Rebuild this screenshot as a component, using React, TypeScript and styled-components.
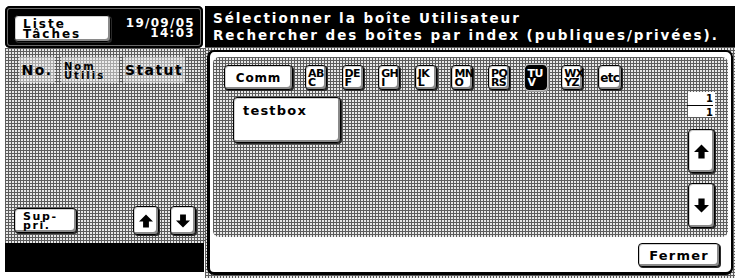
import React from 'react';
import styled, { createGlobalStyle, css } from 'styled-components';

const Global = createGlobalStyle`
  html, body { margin: 0; padding: 0; background: #fff; }
  body { font-family: "DejaVu Sans", "Liberation Sans", sans-serif; font-weight: bold; }
  * { box-sizing: border-box; }
`;

const dither = css`
  background-color: #e8e8e8;
  background-image:
    linear-gradient(to right, #5c5c5c 1px, transparent 1px),
    linear-gradient(to bottom, #5c5c5c 1px, transparent 1px);
  background-size: 3px 3px;
`;

const Screen = styled.div`
  width: 735px;
  height: 278px;
  padding: 6px 0 0 5px;
  display: flex;
  background: #fff;
  overflow: hidden;
`;

const LeftCol = styled.div`
  width: 200px;
  display: flex;
  flex-direction: column;
  padding-bottom: 6px;
`;

const LeftHeader = styled.div`
  height: 42px;
  margin-right: 2px;
  background: #000;
  border-radius: 5px;
  box-shadow: inset 0 0 0 2px #000, inset 0 0 0 3px #6a6a6a;
  display: flex;
  justify-content: space-between;
  align-items: flex-start;
  padding: 9px 8px 0 9px;
`;

const Button = styled.div<{ $w: number; $h: number; $selected?: boolean }>`
  width: ${p => p.$w}px;
  height: ${p => p.$h}px;
  flex: none;
  border: 1px solid #000;
  border-radius: 4px;
  background: ${p => (p.$selected ? '#000' : '#fff')};
  color: ${p => (p.$selected ? '#fff' : '#000')};
  box-shadow: ${p =>
    p.$selected
      ? '0 0 0 1px #bdbdbd, 1px 1px 0 1px #9a9a9a'
      : 'inset -2px -2px 0 #8a8a8a, inset 1px 1px 0 #cfcfcf, 1px 1px 0 #2a2a2a'};
  display: flex;
  align-items: center;
  justify-content: center;
`;

const TwoLineLabel = styled.div<{ $size: number; $ls: number }>`
  font-family: "DejaVu Sans", sans-serif;
  font-weight: bold;
  font-size: ${p => p.$size}px;
  line-height: ${p => p.$size - 2}px;
  letter-spacing: ${p => p.$ls}px;
  text-align: left;
  width: 100%;
  padding-left: 8px;
  padding-top: 1px;
`;

const DateBox = styled.div`
  color: #fff;
  font-size: 12px;
  line-height: 10px;
  letter-spacing: 1.3px;
  text-align: right;
  padding-top: 3px;
`;

const LeftPanel = styled.div`
  ${dither};
  flex: 1;
  display: flex;
  flex-direction: column;
  justify-content: space-between;
  padding: 9px 9px 8px 9px;
`;

const ColHeaders = styled.div`
  display: flex;
  align-items: flex-start;
`;

const ColHead = styled.div<{ $w: number; $ml: number }>`
  width: ${p => p.$w}px;
  margin-left: ${p => p.$ml}px;
  height: 26px;
  background: rgba(240, 240, 240, 0.5);
  font-size: 14px;
  letter-spacing: 1.4px;
  display: flex;
  align-items: center;
  justify-content: center;
`;

const SmallHead = styled.div`
  font-size: 10px;
  line-height: 9px;
  letter-spacing: 2px;
  padding-top: 1px;
  text-align: left;
  width: 100%;
  padding-left: 3px;
`;

const LeftBottom = styled.div`
  display: flex;
  align-items: center;
`;

const ArrowPair = styled.div`
  margin-left: auto;
  display: flex;
  gap: 11px;
`;

const LeftFooter = styled.div`
  height: 29px;
  margin-right: 1px;
  background: #000;
`;

const RightCol = styled.div`
  flex: 1;
  display: flex;
  flex-direction: column;
`;

const RightHeader = styled.div`
  height: 41px;
  background: #000;
  color: #fff;
  font-size: 13.5px;
  line-height: 17px;
  letter-spacing: 1.95px;
  padding: 4px 0 0 8px;
  white-space: nowrap;
`;

const RightBody = styled.div`
  ${dither};
  flex: 1;
  padding: 3px 2px 3px 2px;
  display: flex;
`;

const Panel = styled.div`
  flex: 1;
  background: #fff;
  border-style: solid;
  border-color: #000;
  border-width: 2px 2px 3px 3px;
  border-radius: 7px;
  padding: 5px 3px 0 3px;
  display: flex;
  flex-direction: column;
`;

const GrayArea = styled.div`
  ${dither};
  height: 180px;
  border-radius: 6px;
  display: flex;
  flex-direction: column;
`;

const TabRow = styled.div`
  display: flex;
  align-items: center;
  padding: 8px 0 0 11px;
`;

const Tabs = styled.div`
  display: flex;
  gap: 14.6px;
  margin-left: 12px;
`;

const TabLabel = styled.div`
  font-family: "DejaVu Sans", sans-serif;
  font-weight: bold;
  font-size: 11px;
  line-height: 9px;
  text-align: left;
  width: 100%;
  padding-left: 2px;
  padding-top: 1px;
  letter-spacing: -0.6px;
`;

const BtnText = styled.span<{ $size: number; $ls?: number }>`
  font-size: ${p => p.$size}px;
  letter-spacing: ${p => p.$ls ?? 1}px;
`;

const AreaBody = styled.div`
  flex: 1;
  display: flex;
  justify-content: space-between;
  padding: 0 13px 0 20px;
`;

const BoxList = styled.div`
  padding-top: 7px;
`;

const BoxButton = styled(Button)`
  align-items: flex-start;
  justify-content: flex-start;
  padding: 5px 0 0 9px;
`;

const SideCol = styled.div`
  width: 27px;
  padding-top: 2px;
  display: flex;
  flex-direction: column;
  align-items: stretch;
`;

const PageBox = styled.div`
  background: #fff;
  height: 25px;
  font-size: 10px;
  line-height: 10px;
  text-align: right;
  padding: 2px 2px 0 0;
`;

const PageLine = styled.div`
  height: 1px;
  background: #000;
  margin: 1px 0 2px -1px;
`;

const ScrollStack = styled.div`
  margin-top: 12px;
  display: flex;
  flex-direction: column;
  gap: 10px;
`;

const PanelFooter = styled.div`
  display: flex;
  justify-content: flex-end;
  padding: 6px 8px 0 0;
`;

const Arrow = ({ down, size = 13 }: { down?: boolean; size?: number }) => (
  <svg
    width={size}
    height={size}
    viewBox="0 0 13 13"
    style={down ? { transform: 'rotate(180deg)' } : undefined}
  >
    <path d="M6.5 0.5 L13 7 H9.2 V12.5 H3.8 V7 H0 Z" fill="#000" />
  </svg>
);

const letterTabs: { top: string; bottom: string; selected?: boolean }[] = [
  { top: 'AB', bottom: 'C' },
  { top: 'DE', bottom: 'F' },
  { top: 'GH', bottom: 'I' },
  { top: 'JK', bottom: 'L' },
  { top: 'MN', bottom: 'O' },
  { top: 'PQ', bottom: 'RS' },
  { top: 'TU', bottom: 'V', selected: true },
  { top: 'WX', bottom: 'YZ' },
];

export default function App() {
  return (
    <>
      <Global />
      <Screen>
        <LeftCol>
          <LeftHeader>
            <Button $w={97} $h={27}>
              <TwoLineLabel $size={12} $ls={2}>
                Liste<br />Tâches
              </TwoLineLabel>
            </Button>
            <DateBox>
              19/09/05<br />14:03
            </DateBox>
          </LeftHeader>
          <LeftPanel>
            <ColHeaders>
              <ColHead $w={36} $ml={5}>No.</ColHead>
              <ColHead $w={58} $ml={6}>
                <SmallHead>
                  Nom<br />Utilis
                </SmallHead>
              </ColHead>
              <ColHead $w={62} $ml={4}>Statut</ColHead>
            </ColHeaders>
            <LeftBottom>
              <Button $w={63} $h={25}>
                <TwoLineLabel $size={11} $ls={1.6}>
                  Sup-<br />pri.
                </TwoLineLabel>
              </Button>
              <ArrowPair>
                <Button $w={26} $h={29}>
                  <Arrow size={14} />
                </Button>
                <Button $w={26} $h={29}>
                  <Arrow down size={14} />
                </Button>
              </ArrowPair>
            </LeftBottom>
          </LeftPanel>
          <LeftFooter />
        </LeftCol>
        <RightCol>
          <RightHeader>
            Sélectionner la boîte Utilisateur
            <br />
            Rechercher des boîtes par index (publiques/privées).
          </RightHeader>
          <RightBody>
            <Panel>
              <GrayArea>
                <TabRow>
                  <Button $w={69} $h={25}>
                    <BtnText $size={12} $ls={0.8}>Comm</BtnText>
                  </Button>
                  <Tabs>
                    {letterTabs.map(t => (
                      <Button key={t.top} $w={22} $h={25} $selected={t.selected}>
                        <TabLabel>
                          {t.top}
                          <br />
                          {t.bottom}
                        </TabLabel>
                      </Button>
                    ))}
                    <Button $w={24} $h={25}>
                      <BtnText $size={12} $ls={-0.6}>etc</BtnText>
                    </Button>
                  </Tabs>
                </TabRow>
                <AreaBody>
                  <BoxList>
                    <BoxButton $w={108} $h={46}>
                      <BtnText $size={13} $ls={1.2}>testbox</BtnText>
                    </BoxButton>
                  </BoxList>
                  <SideCol>
                    <PageBox>
                      1
                      <PageLine />
                      1
                    </PageBox>
                    <ScrollStack>
                      <Button $w={27} $h={44}>
                        <Arrow size={15} />
                      </Button>
                      <Button $w={27} $h={45}>
                        <Arrow down size={15} />
                      </Button>
                    </ScrollStack>
                  </SideCol>
                </AreaBody>
              </GrayArea>
              <PanelFooter>
                <Button $w={82} $h={24}>
                  <BtnText $size={13} $ls={1.2}>Fermer</BtnText>
                </Button>
              </PanelFooter>
            </Panel>
          </RightBody>
        </RightCol>
      </Screen>
    </>
  );
}
